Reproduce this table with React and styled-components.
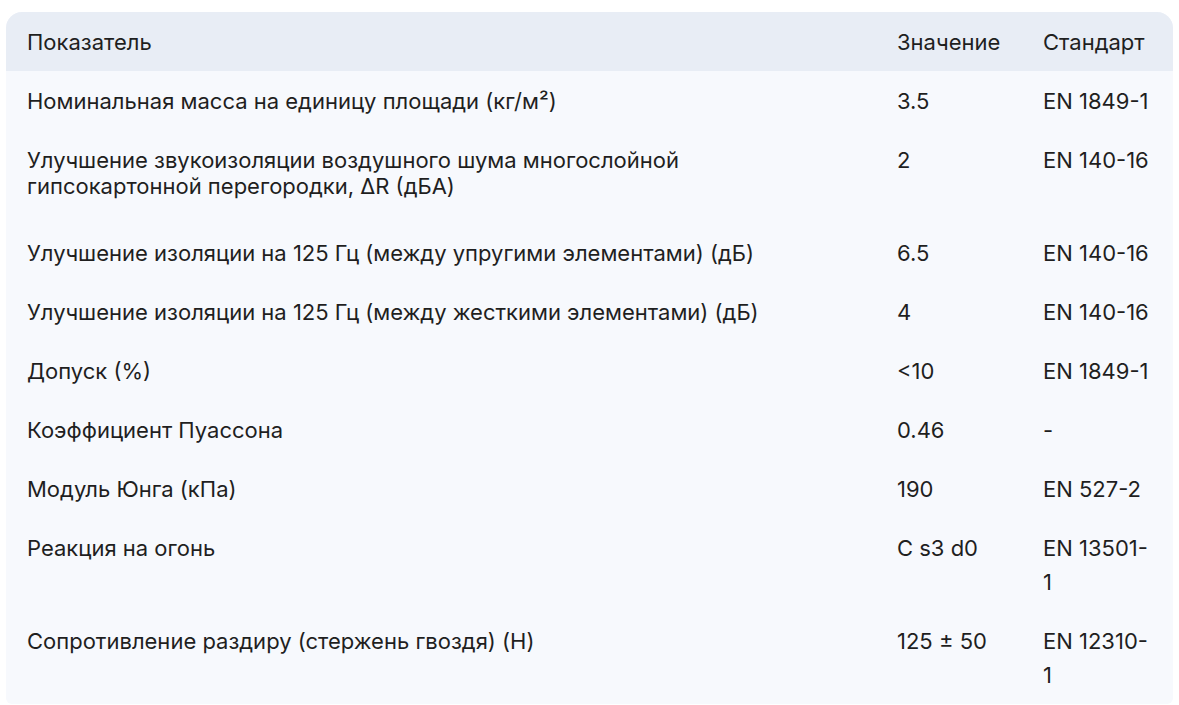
import React from "react";
import styled, { createGlobalStyle } from "styled-components";

const Global = createGlobalStyle`
  html, body { margin: 0; padding: 0; background: #ffffff; }
  body { font-family: "Inter", "Roboto", "Noto Sans", sans-serif; color: #1f1f1f; }
`;

const Page = styled.div`
  padding: 12px 6px;
`;

const Table = styled.table`
  width: 100%;
  table-layout: fixed;
  border-collapse: separate;
  border-spacing: 0;
  background: #f7f9fd;
  border-radius: 16px 16px 6px 6px;
  overflow: hidden;
  font-size: 22px;
  line-height: 34px;
`;

const Col = styled.col`
  width: ${(p) => p.$w || "auto"};
`;

const Head = styled.thead`
  background: #e8edf5;
`;

const HeadCell = styled.th`
  text-align: left;
  font-weight: 400;
  padding: 13px 20px 12px 20px;
  &:first-child { padding-left: 21px; }
  &:last-child { padding-right: 21px; }
`;

const Row = styled.tr`
  height: ${(p) => (p.$tall ? "93px" : "auto")};
`;

const Cell = styled.td`
  vertical-align: top;
  padding: 13px 20px 12px 20px;
  &:last-child { padding-right: 21px; }
`;

const NameCell = styled(Cell)`
  padding: 17px 20px 16px 21px;
  line-height: 26px;
`;

const rows = [
  ["Номинальная масса на единицу площади (кг/м²)", "3.5", "EN 1849-1"],
  [
    <>
      Улучшение звукоизоляции воздушного шума многослойной
      <br />
      гипсокартонной перегородки, ΔR (дБА)
    </>,
    "2",
    "EN 140-16",
    true,
  ],
  ["Улучшение изоляции на 125 Гц (между упругими элементами) (дБ)", "6.5", "EN 140-16"],
  ["Улучшение изоляции на 125 Гц (между жесткими элементами) (дБ)", "4", "EN 140-16"],
  ["Допуск (%)", "<10", "EN 1849-1"],
  ["Коэффициент Пуассона", "0.46", "-"],
  ["Модуль Юнга (кПа)", "190", "EN 527-2"],
  ["Реакция на огонь", "C s3 d0", "EN 13501-1"],
  ["Сопротивление раздиру (стержень гвоздя) (Н)", "125 ± 50", "EN 12310-1"],
];

export default function App() {
  return (
    <Page>
      <Global />
      <Table>
        <colgroup>
          <Col />
          <Col $w="146px" />
          <Col $w="150px" />
        </colgroup>
        <Head>
          <tr>
            <HeadCell>Показатель</HeadCell>
            <HeadCell>Значение</HeadCell>
            <HeadCell>Стандарт</HeadCell>
          </tr>
        </Head>
        <tbody>
          {rows.map((r, i) => (
            <Row key={i} $tall={r[3]}>
              <NameCell>{r[0]}</NameCell>
              <Cell>{r[1]}</Cell>
              <Cell>{r[2]}</Cell>
            </Row>
          ))}
        </tbody>
      </Table>
    </Page>
  );
}
